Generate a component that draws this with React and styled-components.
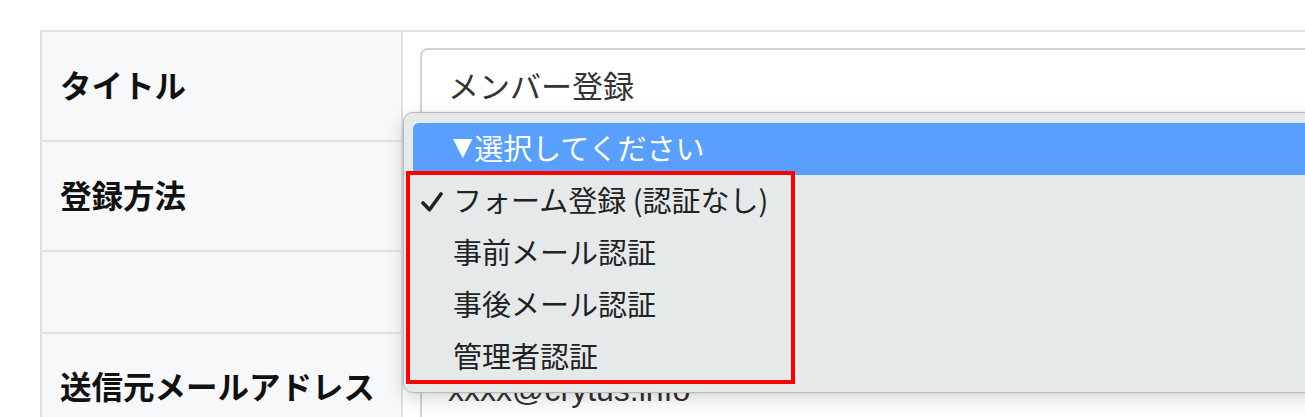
import React from 'react';
import styled, { createGlobalStyle } from 'styled-components';

const GlobalStyle = createGlobalStyle`
  html, body {
    margin: 0;
    padding: 0;
    background: #fff;
    overflow: hidden;
  }
  body {
    font-family: "Noto Sans CJK JP", "Noto Sans", sans-serif;
  }
`;

const Page = styled.div`
  position: relative;
  width: 1305px;
  height: 417px;
  padding: 30px 0 0 40px;
  box-sizing: border-box;
  overflow: hidden;
`;

const FormTable = styled.div`
  display: grid;
  grid-template-columns: 361px 1000px;
  border-top: 2px solid #dee2e6;
  border-left: 2px solid #dee2e6;
`;

const LabelCell = styled.div`
  display: flex;
  align-items: center;
  box-sizing: border-box;
  height: ${p => p.$h}px;
  padding: 0 0 4px 18px;
  background: #f7f8fa;
  border-right: 2px solid #dee2e6;
  border-bottom: 2px solid #dee2e6;
  font-size: 31.5px;
  font-weight: 700;
  color: #111;
`;

const ValueCell = styled.div`
  box-sizing: border-box;
  height: ${p => p.$h}px;
  padding: ${p => p.$top || 16}px 0 0 17px;
  background: #fff;
  border-right: 2px solid #dee2e6;
  border-bottom: 2px solid #dee2e6;
`;

const Input = styled.div`
  display: flex;
  align-items: center;
  box-sizing: border-box;
  height: 76px;
  padding: 0 0 4px 26px;
  border: 2px solid #ced4da;
  border-radius: 8px;
  background: #fff;
  font-family: ${p => (p.$latin ? '"Liberation Sans", Arial, sans-serif' : '"Noto Sans CJK JP", sans-serif')};
  font-size: ${p => (p.$latin ? 32 : 31)}px;
  color: #333;
`;

const Menu = styled.div`
  position: absolute;
  left: 403px;
  top: 112px;
  width: 1000px;
  height: 281px;
  box-sizing: border-box;
  padding: 10px 0 0 9px;
  background: #e6e9ea;
  border: 1px solid #b9bcbd;
  border-radius: 10px;
  box-shadow: 0 6px 18px rgba(0, 0, 0, 0.16), 0 0 3px rgba(0, 0, 0, 0.08);
`;

const Option = styled.div`
  position: relative;
  display: flex;
  align-items: center;
  box-sizing: border-box;
  height: 52px;
  padding: 0 0 5px 40px;
  border-radius: 6px 0 0 6px;
  background: ${p => (p.$active ? '#589ffe' : 'transparent')};
  color: ${p => (p.$active ? '#fff' : '#222')};
  font-size: 29px;
  white-space: nowrap;
`;

const Arrow = styled.span`
  font-family: "DejaVu Sans", sans-serif;
  font-size: 25px;
  margin-right: 2px;
`;

const Check = styled.svg`
  position: absolute;
  left: 8px;
  top: 17px;
`;

const Highlight = styled.div`
  position: absolute;
  left: 406px;
  top: 171px;
  width: 389px;
  height: 213px;
  box-sizing: border-box;
  border: 4px solid #ff0000;
  pointer-events: none;
`;

const options = [
  { label: 'フォーム登録 (認証なし)', checked: true },
  { label: '事前メール認証' },
  { label: '事後メール認証' },
  { label: '管理者認証' },
];

const App = () => {
  return (
    <Page>
      <GlobalStyle />
      <FormTable>
        <LabelCell $h={110}>タイトル</LabelCell>
        <ValueCell $h={110}>
          <Input>メンバー登録</Input>
        </ValueCell>

        <LabelCell $h={110}>登録方法</LabelCell>
        <ValueCell $h={110}>
          <Input />
        </ValueCell>

        <LabelCell $h={82}></LabelCell>
        <ValueCell $h={82}></ValueCell>

        <LabelCell $h={108}>送信元メールアドレス</LabelCell>
        <ValueCell $h={108} $top={20}>
          <Input $latin>xxxx@crytus.info</Input>
        </ValueCell>
      </FormTable>

      <Menu>
        <Option $active>
          <Arrow>▼</Arrow>選択してください
        </Option>
        {options.map(o => (
          <Option key={o.label}>
            {o.checked && (
              <Check width="22" height="20" viewBox="0 0 22 20">
                <path d="M2 11 L8.5 17.8 L20 2" fill="none" stroke="#222" strokeWidth="3.6" strokeLinecap="round" strokeLinejoin="round" />
              </Check>
            )}
            {o.label}
          </Option>
        ))}
      </Menu>

      <Highlight />
    </Page>
  );
};

export default App;
